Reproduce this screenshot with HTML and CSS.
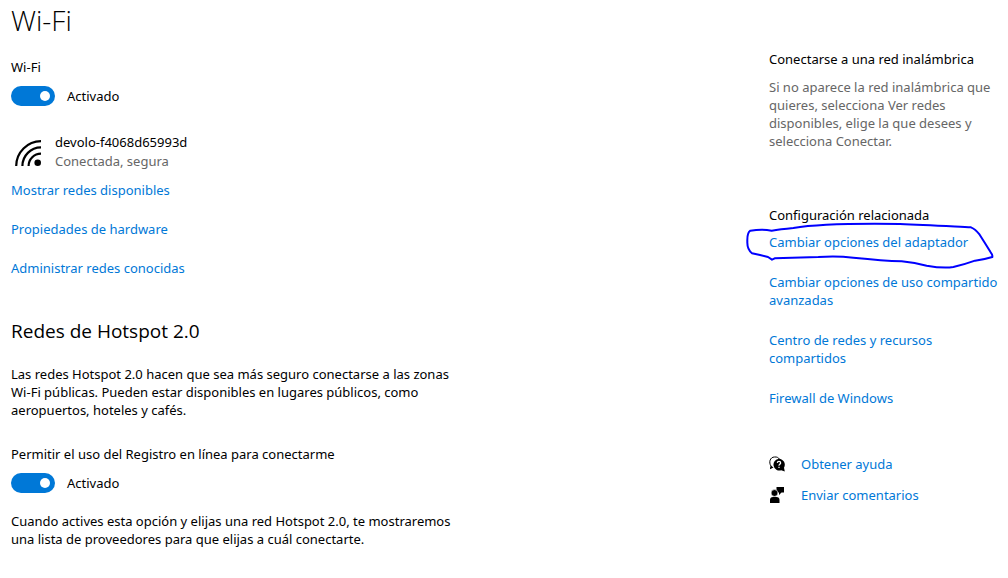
FILE: index.html
```html
<!DOCTYPE html>
<html lang="es">
<head>
<meta charset="utf-8">
<meta name="viewport" content="width=device-width, initial-scale=1">
<title>Wi-Fi</title>
<link rel="stylesheet" href="styles.css">
</head>
<body>
<div class="page">
  <main class="main">
    <h1 class="title">Wi-Fi</h1>
    <section class="setting">
      <span class="setting-name" id="wifi-name">Wi-Fi</span>
      <label class="toggle-row"><input class="toggle" type="checkbox" role="switch" checked aria-describedby="wifi-name"><span>Activado</span></label>
    </section>
    <div class="network">
      <svg class="network-icon" viewBox="0 0 28 28" aria-hidden="true">
        <g fill="none" stroke="#000" stroke-width="2.200">
          <path d="M1.200 27A25 25 0 0 1 26 2.200"/>
          <path d="M7.400 27A18.600 18.600 0 0 1 26 8.400"/>
          <path d="M13.600 27A12.400 12.400 0 0 1 26 14.600"/>
        </g>
        <circle cx="22.700" cy="23.700" r="3.300"/>
      </svg>
      <div>
        <div>devolo-f4068d65993d</div>
        <div class="muted">Conectada, segura</div>
      </div>
    </div>
    <nav class="links">
      <a href="#">Mostrar redes disponibles</a>
      <a href="#">Propiedades de hardware</a>
      <a href="#">Administrar redes conocidas</a>
    </nav>
    <h2 class="subtitle">Redes de Hotspot 2.0</h2>
    <p class="text intro">Las redes Hotspot 2.0 hacen que sea más seguro conectarse a las zonas Wi-Fi públicas. Pueden estar disponibles en lugares públicos, como aeropuertos, hoteles y cafés.</p>
    <section class="setting">
      <span class="setting-name" id="signup-name">Permitir el uso del Registro en línea para conectarme</span>
      <label class="toggle-row"><input class="toggle" type="checkbox" role="switch" checked aria-describedby="signup-name"><span>Activado</span></label>
    </section>
    <p class="text">Cuando actives esta opción y elijas una red Hotspot 2.0, te mostraremos una lista de proveedores para que elijas a cuál conectarte.</p>
  </main>
  <aside class="side">
    <section class="connect">
      <h3 class="side-title">Conectarse a una red inalámbrica</h3>
      <p class="muted">Si no aparece la red inalámbrica que quieres, selecciona Ver redes disponibles, elige la que desees y selecciona Conectar.</p>
    </section>
    <section class="related">
      <h3 class="side-title">Configuración relacionada</h3>
      <nav class="related-links">
        <a href="#">Cambiar opciones del adaptador</a>
        <a href="#">Cambiar opciones de uso compartido avanzadas</a>
        <a href="#">Centro de redes y recursos compartidos</a>
        <a href="#">Firewall de Windows</a>
      </nav>
      <svg class="pen-mark" viewBox="0 0 804 360" aria-hidden="true">
        <path d="M95 92C75 88 50 89 31 92Q21 98 22 125Q21 148 36 160L60 165L84 171L96 179L104 175L235 171Q290 167 340 173Q430 182 485 184Q525 188 560 197Q610 206 640 201Q675 193 705 182Q735 178 757 171Q758 164 752 157Q737 132 719 104Q706 87 693 82C650 80 560 75 480 72C340 70 220 74 160 84Q120 88 95 92Z" fill="none" stroke="#00f" stroke-width="6" stroke-linejoin="round"/>
      </svg>
    </section>
    <nav class="help">
      <a class="help-link" href="#">
        <svg class="help-icon" viewBox="0 0 16 16" aria-hidden="true">
          <path d="M1.500 12.800L2 10C-.5 6.500 1 1 5.500 1C8 .7 9.500 1.700 10.300 3" fill="none" stroke="#000"/>
          <path d="M1 13.200L2.200 9.800L4.500 11.500Z"/>
          <path d="M10 2.800a5.900 5.900 0 0 1 5 8.900l.8 3.800-3.600-1.200A5.900 5.900 0 1 1 10 2.800Z"/>
          <path d="M8.300 6.900Q8.400 5.400 10 5.400Q11.700 5.400 11.700 6.900Q11.600 7.900 10.500 8.400Q10 8.700 10 9.800M10 10.800V12" fill="none" stroke="#fff" stroke-width="1.200"/>
        </svg>
        <span>Obtener ayuda</span>
      </a>
      <a class="help-link" href="#">
        <svg class="help-icon" viewBox="0 0 16 16" aria-hidden="true">
          <path d="M7.500 0H15V5.500H12.500L10 8V5.500H7.500Z"/>
          <circle cx="5.500" cy="6" r="3.400" stroke="#fff" stroke-width=".6"/>
          <path d="M1 16V13Q1 10 4 10H7.500Q10.500 10 10.500 13V16Z"/>
        </svg>
        <span>Enviar comentarios</span>
      </a>
    </nav>
  </aside>
</div>
</body>
</html>
```
FILE: styles.css
```css
* {
  box-sizing: border-box;
}

body {
  margin: 0;
  background: #fff;
  color: #000;
  font: 13px/18px "Noto Sans", "Open Sans", sans-serif;
}

h1, h2, h3, p {
  margin: 0;
  font-weight: 400;
}

a {
  color: #0078d7;
  text-decoration: none;
}

a:hover {
  color: #666;
}

.page {
  display: flex;
  justify-content: space-between;
  gap: 24px;
  padding: 2px 0 24px 11px;
}

.main {
  flex: 1;
  min-width: 0;
}

.title {
  margin-bottom: 20px;
  font-family: "Open Sans", "Noto Sans", sans-serif;
  font-size: 28px;
  font-weight: 300;
  line-height: 36px;
}

.setting {
  display: flex;
  flex-direction: column;
  align-items: flex-start;
  gap: 10px;
}

.toggle-row {
  display: flex;
  align-items: center;
  gap: 12px;
  height: 20px;
}

.toggle {
  display: flex;
  align-items: center;
  justify-content: flex-end;
  appearance: none;
  width: 44px;
  height: 20px;
  margin: 0;
  padding: 0 5px;
  border-radius: 10px;
  background: #0078d7;
}

.toggle::before {
  content: "";
  width: 10px;
  height: 10px;
  border-radius: 50%;
  background: #fff;
}

.toggle:not(:checked) {
  justify-content: flex-start;
  background: #999;
}

.network {
  display: flex;
  align-items: flex-end;
  gap: 12px;
  margin-top: 27px;
  padding-left: 4px;
  line-height: 19px;
}

.network-icon {
  width: 28px;
  height: 28px;
  margin-bottom: 4px;
}

.muted {
  color: #666;
}

.links {
  display: flex;
  flex-direction: column;
  align-items: flex-start;
  gap: 21px;
  margin-top: 10px;
}

.subtitle {
  margin: 42px 0 22px;
  font-family: "Open Sans", "Noto Sans", sans-serif;
  font-size: 19px;
  line-height: 24px;
}

.text {
  max-width: 456px;
}

.intro {
  margin-bottom: 26px;
}

.setting + .text {
  margin-top: 19px;
}

.side {
  width: 239px;
  padding-top: 48px;
}

.side-title {
  font-size: 13px;
}

.connect .side-title {
  margin-bottom: 10px;
}

.related {
  position: relative;
  margin-top: 56px;
}

.related-links {
  display: flex;
  flex-direction: column;
  align-items: flex-start;
  gap: 22px;
  margin-top: 9px;
}

.pen-mark {
  position: absolute;
  top: -6px;
  left: -29px;
  width: 268px;
  height: 120px;
  pointer-events: none;
}

.help {
  display: flex;
  flex-direction: column;
  align-items: flex-start;
  gap: 13px;
  margin-top: 48px;
}

.help-link {
  display: flex;
  align-items: center;
  gap: 16px;
}

.help-icon {
  width: 16px;
  height: 16px;
}
```
